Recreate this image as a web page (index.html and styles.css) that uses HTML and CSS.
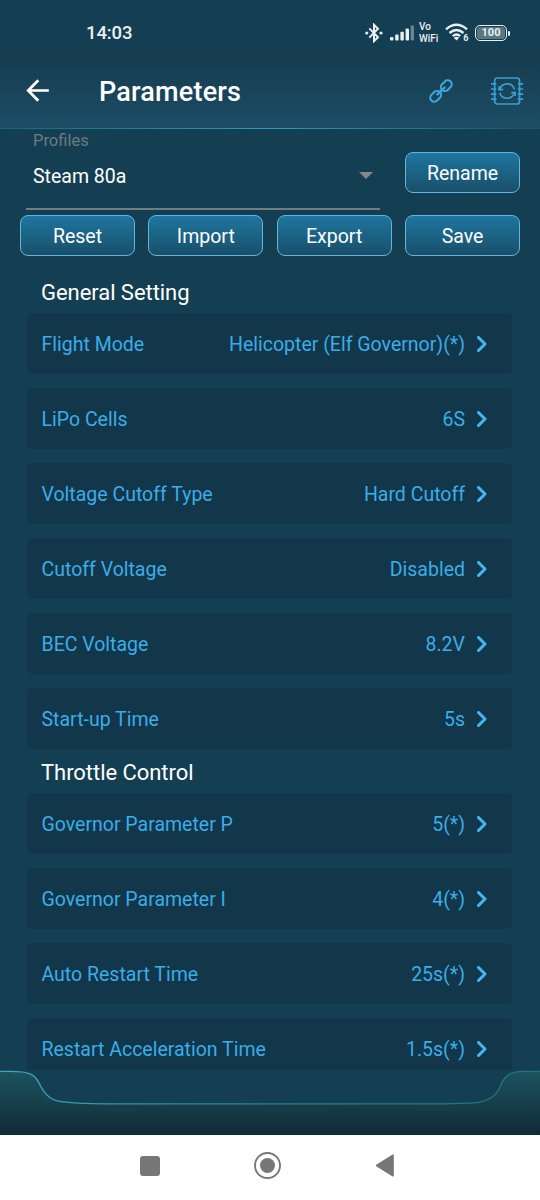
FILE: index.html
```html
<!DOCTYPE html>
<html lang="en">
<head>
<meta charset="utf-8">
<title>Parameters</title>
<link rel="stylesheet" href="styles.css">
</head>
<body>
<div class="screen">
  <div class="status">
    <span class="clock">14:03</span>
    <div class="status-icons">
      <svg class="bt" width="18" height="20" viewBox="0 0 18 20" fill="none" stroke="#e8f0f4" stroke-width="2"><path d="M4.3 5.4 13 14.2 9 18.2V1.8L13 5.8 4.3 14.6"/><circle cx="1.8" cy="10" r="1.6" fill="#e8f0f4" stroke="none"/><circle cx="16" cy="10" r="1.6" fill="#e8f0f4" stroke="none"/></svg>
      <svg class="signal" width="24" height="16" viewBox="0 0 24 16" fill="#e8f0f4"><rect x="0" y="12" width="3.4" height="3.5" rx="1"/><rect x="5.2" y="9.6" width="3.4" height="5.9" rx="1"/><rect x="10.4" y="6.8" width="3.4" height="8.7" rx="1"/><rect x="15.6" y="3.6" width="3.4" height="11.9" rx="1"/><rect x="20.6" y="0.5" width="3.4" height="15" rx="1" opacity=".4"/></svg>
      <div class="vowifi"><span>Vo</span><span>WiFi</span></div>
      <svg class="wifi" width="25" height="20" viewBox="0 0 25 20" fill="none" stroke="#e8f0f4" stroke-width="2.4"><path d="M1 6.4Q11.5-2.7 22 6.4M4.5 10Q11.5 3.8 18.5 10M7.8 13.2Q11.5 10 15.2 13.2"/><path d="M8.8 14.7 11.5 17.6 14.2 14.7Q11.5 12.8 8.8 14.7Z" fill="#e8f0f4" stroke="none"/><text x="18.2" y="18.4" class="wifi-gen">6</text></svg>
      <div class="battery"><div class="cell">100</div><i class="tip"></i></div>
    </div>
  </div>
  <header class="appbar">
    <svg class="back" width="24" height="24" viewBox="0 0 24 24" fill="none" stroke="#fff" stroke-width="2.7"><path d="M22.8 11.5H3M12.3 1.3 2.2 11.5 12.3 21.7"/></svg>
    <h1>Parameters</h1>
    <svg class="link" width="24" height="24" viewBox="0 0 24 24" fill="none" stroke="#3eaae2" stroke-width="2"><g transform="rotate(-45 12 12)"><rect x="-1.5" y="8" width="12" height="8" rx="4"/><rect x="13.5" y="8" width="12" height="8" rx="4"/><path d="M7 12H17" stroke-width="2.2" stroke-linecap="round"/></g></svg>
    <svg class="chip" width="34" height="28" viewBox="0 0 34 28" fill="none" stroke="#3a9fd3" stroke-width="1.7"><rect x="4.7" y="1" width="24.8" height="26" rx="2.5"/><path d="M1 6.8H6.4M1 12H6.4M1 17.2H6.4M1 22.2H6.4M27.8 6.8H33.2M27.8 12H33.2M27.8 17.2H33.2M27.8 22.2H33.2"/><path d="M9.8 12.5A7.6 7.6 0 0 1 24.5 12.4M24.4 15.8A7.6 7.6 0 0 1 9.8 15.7"/><path d="M9 9.2V12.6H13.2M25.2 18.9V15.6H21.2"/></svg>
  </header>
  <main class="content">
    <section class="profile">
      <div class="select">
        <label>Profiles</label>
        <div class="value">Steam 80a<i class="caret"></i></div>
      </div>
      <button>Rename</button>
    </section>
    <div class="actions"><button>Reset</button><button>Import</button><button>Export</button><button>Save</button></div>
    <h2>General Setting</h2>
    <div class="list">
      <div class="row"><span>Flight Mode</span><b>Helicopter (Elf Governor)(*)</b><svg class="chev" viewBox="0 0 10 16"><path d="M1.5 1.5 8 8 1.5 14.5"/></svg></div>
      <div class="row"><span>LiPo Cells</span><b>6S</b><svg class="chev" viewBox="0 0 10 16"><path d="M1.5 1.5 8 8 1.5 14.5"/></svg></div>
      <div class="row"><span>Voltage Cutoff Type</span><b>Hard Cutoff</b><svg class="chev" viewBox="0 0 10 16"><path d="M1.5 1.5 8 8 1.5 14.5"/></svg></div>
      <div class="row"><span>Cutoff Voltage</span><b>Disabled</b><svg class="chev" viewBox="0 0 10 16"><path d="M1.5 1.5 8 8 1.5 14.5"/></svg></div>
      <div class="row"><span>BEC Voltage</span><b>8.2V</b><svg class="chev" viewBox="0 0 10 16"><path d="M1.5 1.5 8 8 1.5 14.5"/></svg></div>
      <div class="row"><span>Start-up Time</span><b>5s</b><svg class="chev" viewBox="0 0 10 16"><path d="M1.5 1.5 8 8 1.5 14.5"/></svg></div>
    </div>
    <h2 class="second">Throttle Control</h2>
    <div class="list">
      <div class="row"><span>Governor Parameter P</span><b>5(*)</b><svg class="chev" viewBox="0 0 10 16"><path d="M1.5 1.5 8 8 1.5 14.5"/></svg></div>
      <div class="row"><span>Governor Parameter I</span><b>4(*)</b><svg class="chev" viewBox="0 0 10 16"><path d="M1.5 1.5 8 8 1.5 14.5"/></svg></div>
      <div class="row"><span>Auto Restart Time</span><b>25s(*)</b><svg class="chev" viewBox="0 0 10 16"><path d="M1.5 1.5 8 8 1.5 14.5"/></svg></div>
      <div class="row"><span>Restart Acceleration Time</span><b>1.5s(*)</b><svg class="chev" viewBox="0 0 10 16"><path d="M1.5 1.5 8 8 1.5 14.5"/></svg></div>
    </div>
  </main>
  <svg class="dock" width="540" height="65" viewBox="0 0 540 65">
    <defs>
      <linearGradient id="fill" x1="0" y1="0" x2="0" y2="1"><stop offset="0" stop-color="#1b535f"/><stop offset=".5" stop-color="#163f4b"/><stop offset="1" stop-color="#0f2a35"/></linearGradient>
      <linearGradient id="edge" x1="0" y1="0" x2="1" y2="0"><stop offset="0" stop-color="#3fa5b8"/><stop offset=".5" stop-color="#2a7e93"/><stop offset="1" stop-color="#23707c"/></linearGradient>
    </defs>
    <path fill="url(#fill)" d="M0 1.3H11C28 1.3 35 4 39 13C45 26 52 31.5 66 32.2Q82 33.8 103 33.8H445C462 33.5 470 33.6 478 32.4C490 30 496 26 500 17C504 6 510 1.5 522 1.3H540V65H0Z"/>
    <path fill="none" stroke="url(#edge)" stroke-width="1.3" d="M0 1.3H11C28 1.3 35 4 39 13C45 26 52 31.5 66 32.2Q82 33.8 103 33.8H445C462 33.5 470 33.6 478 32.4C490 30 496 26 500 17C504 6 510 1.5 522 1.3H540"/>
  </svg>
  <nav class="sysnav">
    <i class="recent"></i>
    <svg class="home" width="28" height="28" viewBox="0 0 28 28"><circle cx="14.5" cy="13.5" r="12.5" fill="none" stroke="#777" stroke-width="1.9"/><circle cx="14.5" cy="13.5" r="7.5" fill="#777"/></svg>
    <svg class="prev" width="20" height="24" viewBox="0 0 20 24"><path d="M1.6 11.5 18 1.2V21.8Z" fill="#777" stroke="#777" stroke-width="1.6" stroke-linejoin="round"/></svg>
  </nav>
</div>
</body>
</html>
```
FILE: styles.css
```css
* { box-sizing: border-box; }
body { margin: 0; font-family: Roboto, "Liberation Sans", sans-serif; }
.screen { width: 540px; height: 1200px; overflow: hidden; display: flex; flex-direction: column; background: #143f52; }
.status { height: 52px; flex: none; display: flex; justify-content: space-between; padding: 14px 30px 0 86px; color: #e8f0f4; }
.clock { font-size: 18.5px; line-height: 39px; height: 40px; font-weight: 500; letter-spacing: -0.1px; }
.status-icons { display: flex; height: 38px; align-items: center; }
.signal { margin-left: 7px; }
.vowifi { display: flex; flex-direction: column; font-size: 10px; font-weight: 500; line-height: 12px; margin: 0 0 0 5px; width: 21px; }
.wifi { margin-left: 5px; }
.wifi-gen { font: bold 9px Roboto, sans-serif; fill: #e8f0f4; stroke: none; }
.battery { display: flex; align-items: center; margin-left: 5px; }
.cell { width: 32px; height: 16px; border: 1.5px solid #e8f0f4; border-radius: 5px; font-size: 11px; line-height: 12px; font-weight: 700; text-align: center; padding: 1px; background: #5c7683 content-box; }
.tip { width: 2px; height: 5px; margin-left: 1px; background: #e8f0f4; border-radius: 1px; }
.appbar { height: 77px; flex: none; display: flex; align-items: center; padding: 1px 16px 0 26px; background: linear-gradient(#163b4e, #1c4d65); border-bottom: 1.5px solid; border-image: linear-gradient(90deg, #1c6379, #2a9db8 50%, #1c5369) 1; }
.appbar h1 { margin: 0 0 0 49px; padding-top: 2px; flex: 1; font-size: 27px; letter-spacing: 0.2px; font-weight: 500; color: #fff; }
.chip { margin-left: 37px; }
.content { height: 941px; flex: none; overflow: hidden; padding: 0 20px; }
.profile { height: 81px; display: flex; justify-content: space-between; }
.select { width: 354px; margin-left: 6px; border-bottom: 2px solid #737c80; padding: 2px 7px 0; }
.select label { display: block; font-size: 16.5px; line-height: 20px; color: #6d7a80; }
.value { display: flex; justify-content: space-between; align-items: center; margin-top: 14px; line-height: 24px; font-size: 19.5px; color: #fff; }
.caret { border: 7px solid transparent; border-top-color: #85898b; border-bottom: 0; margin-top: -3px; }
button { width: 115px; height: 41px; padding: 2px 0 0; border: 1.5px solid #62b5dc; border-radius: 8px; background: linear-gradient(#1e76a0, #194f69); color: #fff; font: 19.5px/36px Roboto, sans-serif; }
.profile button { margin-top: 23px; }
.actions { display: flex; justify-content: space-between; margin-top: 5px; }
h2 { margin: 0 0 0 21px; font-size: 22px; letter-spacing: -0.05px; font-weight: 400; color: #fff; height: 57px; line-height: 74px; }
h2.second { height: 44px; line-height: 47px; }
.list { display: flex; flex-direction: column; gap: 14px; margin: 0 8px 0 7px; }
.row { height: 61px; border-radius: 5px; background: #12364a; display: flex; align-items: center; padding: 1px 25px 0 14.5px; color: #3bade7; font-size: 19.5px; }
.row span { flex: 1; }
.row b { font-weight: 400; }
.chev { width: 10px; height: 16px; margin-left: 12px; fill: none; stroke: #45b7f0; stroke-width: 3; stroke-linecap: round; stroke-linejoin: round; }
.dock { flex: none; display: block; }
.sysnav { flex: 1; background: #fff; display: flex; align-items: center; padding: 0 0 4px 139px; }
.recent { width: 20px; height: 20px; border-radius: 3px; background: #777; margin-left: 1px; }
.home { margin-left: 93px; }
.prev { margin-left: 94px; }
```
